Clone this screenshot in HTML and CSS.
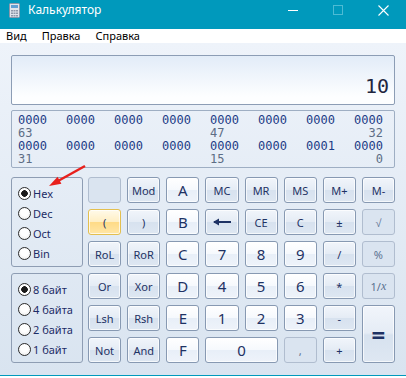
FILE: index.html
```html
<!DOCTYPE html>
<html lang="ru">
<head>
    <meta charset="UTF-8">
    <title>Калькулятор</title>
    <link rel="stylesheet" href="styles.css">
</head>
<body>
    <div class="window">
        <div class="titlebar">
            <svg class="title-icon" width="11" height="15" viewBox="0 0 11 15">
                <rect x="0.5" y="0.5" width="10" height="14" rx="1" fill="#dfe4ec" stroke="#8b97aa"/>
                <rect x="2" y="2" width="7" height="3" fill="#5f9fd4"/>
                <g fill="#8d98aa">
                    <rect x="2" y="7" width="2" height="1.5"/><rect x="4.5" y="7" width="2" height="1.5"/><rect x="7" y="7" width="2" height="1.5"/>
                    <rect x="2" y="9.5" width="2" height="1.5"/><rect x="4.5" y="9.5" width="2" height="1.5"/><rect x="7" y="9.5" width="2" height="1.5"/>
                    <rect x="2" y="12" width="2" height="1.5"/><rect x="4.5" y="12" width="2" height="1.5"/><rect x="7" y="12" width="2" height="1.5"/>
                </g>
            </svg>
            <span class="title">Калькулятор</span>
            <div class="controls">
                <svg width="10" height="10" viewBox="0 0 10 10"><line x1="0" y1="5.5" x2="10" y2="5.5" stroke="#fff"/></svg>
                <svg width="10" height="10" viewBox="0 0 10 10"><rect x="0.5" y="0.5" width="9" height="9" fill="none" stroke="#4dbbd4"/></svg>
                <svg width="11" height="11" viewBox="0 0 11 11"><path d="M0.5 0.5 L10.5 10.5 M10.5 0.5 L0.5 10.5" stroke="#fff" stroke-width="1.1"/></svg>
            </div>
        </div>

        <div class="menubar">
            <span>Вид</span>
            <span>Правка</span>
            <span>Справка</span>
        </div>

        <div class="main">
            <div class="display">10</div>

            <div class="bits">
                <span>0000</span><span>0000</span><span>0000</span><span>0000</span><span>0000</span><span>0000</span><span>0000</span><span>0000</span>
                <span class="pos">63</span><span></span><span></span><span></span><span class="pos">47</span><span></span><span></span><span class="pos right">32</span>
                <span>0000</span><span>0000</span><span>0000</span><span>0000</span><span>0000</span><span>0000</span><span>0001</span><span>0000</span>
                <span class="pos">31</span><span></span><span></span><span></span><span class="pos">15</span><span></span><span></span><span class="pos right">0</span>
            </div>

            <div class="keypad">
                <div class="groups">
                    <div class="group">
                        <label class="radio"><input type="radio" name="base" checked>Hex</label>
                        <label class="radio"><input type="radio" name="base">Dec</label>
                        <label class="radio"><input type="radio" name="base">Oct</label>
                        <label class="radio"><input type="radio" name="base">Bin</label>
                    </div>
                    <div class="group">
                        <label class="radio"><input type="radio" name="size" checked>8 байт</label>
                        <label class="radio"><input type="radio" name="size">4 байта</label>
                        <label class="radio"><input type="radio" name="size">2 байта</label>
                        <label class="radio"><input type="radio" name="size">1 байт</label>
                    </div>
                </div>

                <div class="keys">
                    <button class="key off"></button>
                    <button class="key">Mod</button>
                    <button class="key num">A</button>
                    <button class="key">MC</button>
                    <button class="key">MR</button>
                    <button class="key">MS</button>
                    <button class="key">M+</button>
                    <button class="key">M-</button>

                    <button class="key hot">(</button>
                    <button class="key">)</button>
                    <button class="key num">B</button>
                    <button class="key">
                        <svg width="18" height="8" viewBox="0 0 18 8"><path d="M1 4 H18" stroke="#1e3264" stroke-width="2"/><path d="M0 4 L6 0.5 V7.5 Z" fill="#1e3264"/></svg>
                    </button>
                    <button class="key">CE</button>
                    <button class="key">C</button>
                    <button class="key">±</button>
                    <button class="key off">√</button>

                    <button class="key">RoL</button>
                    <button class="key">RoR</button>
                    <button class="key num">C</button>
                    <button class="key num">7</button>
                    <button class="key num">8</button>
                    <button class="key num">9</button>
                    <button class="key">/</button>
                    <button class="key off">%</button>

                    <button class="key">Or</button>
                    <button class="key">Xor</button>
                    <button class="key num">D</button>
                    <button class="key num">4</button>
                    <button class="key num">5</button>
                    <button class="key num">6</button>
                    <button class="key">*</button>
                    <button class="key off">1/<i>x</i></button>

                    <button class="key">Lsh</button>
                    <button class="key">Rsh</button>
                    <button class="key num">E</button>
                    <button class="key num">1</button>
                    <button class="key num">2</button>
                    <button class="key num">3</button>
                    <button class="key">-</button>
                    <button class="key equals">=</button>

                    <button class="key">Not</button>
                    <button class="key">And</button>
                    <button class="key num">F</button>
                    <button class="key num zero">0</button>
                    <button class="key off">,</button>
                    <button class="key">+</button>
                </div>
            </div>
        </div>

        <div class="bottom"></div>

        <svg class="pointer" width="406" height="378" viewBox="0 0 406 378">
            <line x1="85" y1="166" x2="58" y2="181" stroke="#e8201c" stroke-width="2.5"/>
            <polygon points="49,186 57.6,176.7 61.4,183.7" fill="#e8201c"/>
        </svg>
    </div>
</body>
</html>
```

FILE: styles.css
```css
* {
    box-sizing: border-box;
}

body {
    margin: 0;
    width: 406px;
    height: 378px;
    overflow: hidden;
    background-color: #fff;
    font-family: "Noto Sans", sans-serif;
}

.window {
    position: relative;
    height: 378px;
}

.titlebar {
    height: 29px;
    background-color: #0099bc;
    color: #fff;
    display: flex;
    align-items: flex-start;
}

.title-icon {
    margin: 3px 0 0 9px;
}

.title {
    margin-left: 8px;
    font-size: 12px;
    line-height: 20px;
}

.controls {
    margin-left: auto;
    margin-right: 17px;
    padding-top: 5px;
    display: flex;
    gap: 35px;
}

.menubar {
    height: 14px;
    background-color: #fff;
    display: flex;
    gap: 15px;
    padding-left: 6px;
    font-size: 11px;
    line-height: 14px;
    color: #000;
}

.main {
    height: 332px;
    padding: 12px 11px 0;
    background: linear-gradient(#eef3fa, #d9e4f0);
}

.display {
    height: 50px;
    border: 1px solid #8c9db5;
    border-radius: 2px;
    background: linear-gradient(#e2ecf8, #fdfeff 85%);
    display: flex;
    justify-content: flex-end;
    align-items: flex-end;
    padding: 0 5px 5px;
    font-family: "DejaVu Sans Mono", monospace;
    font-size: 20px;
    line-height: 26px;
    color: #22263f;
}

.bits {
    margin-top: 5px;
    height: 58px;
    border: 1px solid #9eaec3;
    border-radius: 2px;
    padding: 3px 0 0 6px;
    display: grid;
    grid-template-columns: repeat(8, 29px);
    grid-auto-rows: 13px;
    column-gap: 19px;
    font-family: "DejaVu Sans Mono", monospace;
    font-size: 12px;
    line-height: 13px;
    color: #1d3c86;
}

.bits .pos {
    color: #5d6d85;
}

.bits .right {
    text-align: right;
}

.keypad {
    margin-top: 9px;
    display: flex;
    gap: 5px;
}

.groups {
    width: 72px;
    display: flex;
    flex-direction: column;
    gap: 6px;
}

.group {
    height: 90px;
    border: 1px solid #8e9db3;
    border-radius: 3px;
    padding: 5px 0 0 6px;
}

.radio {
    height: 20px;
    display: flex;
    align-items: center;
    gap: 2px;
    font-size: 11px;
    color: #1d2c66;
    white-space: nowrap;
}

.radio input {
    -webkit-appearance: none;
    appearance: none;
    width: 13px;
    height: 13px;
    margin: 0;
    border: 1px solid #2b2b2b;
    border-radius: 50%;
    background: radial-gradient(circle at 50% 40%, #fff 40%, #e4e4e4);
}

.radio input:checked {
    background: radial-gradient(circle, #1a1a1a 0 3px, #fff 3.6px);
}

.keys {
    flex: 1;
    display: grid;
    grid-template-columns: repeat(8, 1fr);
    grid-template-rows: repeat(6, 26px);
    gap: 6px;
}

.key {
    margin: 0;
    padding: 0;
    border: 1px solid #8799b2;
    border-radius: 3px;
    background: linear-gradient(#f1f5fb, #e5ecf5 48%, #d7e2ef 52%, #dee7f2);
    box-shadow: inset 0 0 0 1px rgba(255, 255, 255, 0.7);
    font-family: "Noto Sans", sans-serif;
    font-size: 11px;
    color: #1e3264;
    display: flex;
    align-items: center;
    justify-content: center;
}

.key.num {
    background: linear-gradient(#ffffff, #f6f9fd 48%, #e8eff8 52%, #eef3fa);
    font-size: 15px;
}

.key.off {
    background-color: #dae4f0;
    background-image: none;
    border-color: #b0bdcf;
    box-shadow: none;
    color: #5b7191;
}

.key.hot {
    border-color: #e3bf4f;
    background: linear-gradient(#fffaea, #ffefc4 48%, #ffdb87 52%, #ffe6a6);
}

.key.equals {
    grid-row: span 2;
    font-size: 24px;
    font-weight: bold;
}

.key.zero {
    grid-column: span 2;
}

.key i {
    font-family: "Liberation Serif", serif;
    font-size: 12px;
}

.bottom {
    height: 3px;
    border-top: 1px solid #0099bc;
    background-color: #fff;
}

.pointer {
    position: absolute;
    top: 0;
    left: 0;
    pointer-events: none;
}
```
